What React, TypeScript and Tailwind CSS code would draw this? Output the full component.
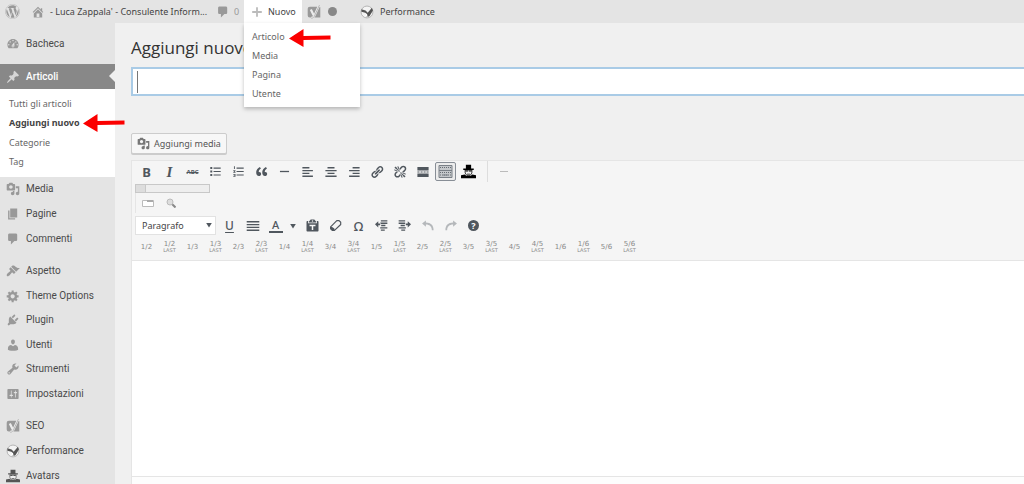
import React from 'react';
import { FaWordpress } from 'react-icons/fa';

type IconProps = { name: string; className?: string };

const PATHS: Record<string, string> = {
  home: 'M16 8.5l1.53 1.53-1.06 1.06L10 4.6l-6.47 6.49-1.06-1.06L10 2.5l4 4v-2h2v4zm-6-2.46l6 5.99V18H4v-5.97zM12 17v-5H8v5h4z',
  dashboard:
    'M3.76 16h12.48c1.1-1.37 1.76-3.11 1.76-5 0-4.42-3.58-8-8-8s-8 3.58-8 8c0 1.89.66 3.63 1.76 5zM10 4c.55 0 1 .45 1 1s-.45 1-1 1-1-.45-1-1 .45-1 1-1zM6 6c.55 0 1 .45 1 1s-.45 1-1 1-1-.45-1-1 .45-1 1-1zm8 0c.55 0 1 .45 1 1s-.45 1-1 1-1-.45-1-1 .45-1 1-1zm-5.37 5.55L12 7v6c0 1.1-.9 2-2 2s-2-.9-2-2c0-.57.24-1.08.63-1.45zM4 10c.55 0 1 .45 1 1s-.45 1-1 1-1-.45-1-1 .45-1 1-1zm12 0c.55 0 1 .45 1 1s-.45 1-1 1-1-.45-1-1 .45-1 1-1zm-5 3c0-.55-.45-1-1-1s-1 .45-1 1 .45 1 1 1 1-.45 1-1z',
  pin: 'M10.44 3.02l1.82-1.82 6.36 6.35-1.83 1.82c-1.05-.68-2.48-.57-3.41.36l-.75.75c-.92.93-1.04 2.35-.35 3.41l-1.83 1.82-2.41-2.41-2.8 2.79c-.42.42-3.38 2.71-3.8 2.29s1.86-3.39 2.28-3.81l2.79-2.79L4.1 9.36l1.83-1.82c1.05.69 2.48.57 3.4-.36l.75-.75c.93-.92 1.05-2.35.36-3.41z',
  media:
    'M13 11V4c0-.55-.45-1-1-1h-1.67L9 1H5L3.67 3H2c-.55 0-1 .45-1 1v7c0 .55.45 1 1 1h10c.55 0 1-.45 1-1zM7 4.5c1.38 0 2.5 1.12 2.5 2.5S8.38 9.5 7 9.5 4.5 8.38 4.5 7 5.62 4.5 7 4.5zM14 6h5v10.5c0 1.38-1.12 2.5-2.5 2.5S14 17.88 14 16.5s1.12-2.5 2.5-2.5c.17 0 .34.02.5.05V9h-3V6zm-4 8.05V13h2v3.5c0 1.38-1.12 2.5-2.5 2.5S7 17.88 7 16.5 8.12 14 9.5 14c.17 0 .34.02.5.05z',
  page: 'M6 15V2h10v13H6zm-1 1h8v2H3V5h2v11z',
  comment: 'M5 2h9c1.1 0 2 .9 2 2v7c0 1.1-.9 2-2 2h-2l-5 5v-5H5c-1.1 0-2-.9-2-2V4c0-1.1.9-2 2-2z',
  brush:
    'M14.48 11.06L7.41 3.99l1.5-1.5c.5-.56 2.3-.47 3.51.32 1.21.8 1.43 1.28 2.91 2.1 1.18.64 2.45 1.26 4.45.85zm-.71.71L6.7 4.7 4.93 6.47c-.39.39-.39 1.02 0 1.41l1.06 1.06c.39.39.39 1.03 0 1.42-.6.6-1.43 1.11-2.21 1.69-.35.26-.7.53-1.01.84C1.43 14.23.4 16.08 1.4 17.07c.99 1 2.84-.03 4.18-1.36.31-.31.58-.66.85-1.02.57-.78 1.08-1.61 1.69-2.21.39-.39 1.02-.39 1.41 0l1.06 1.06c.39.39 1.02.39 1.41 0z',
  gear: 'M18 12h-2.18c-.17.7-.44 1.35-.81 1.93l1.54 1.54-2.1 2.1-1.54-1.54c-.58.36-1.23.63-1.91.79V19H8v-2.18c-.68-.16-1.33-.43-1.91-.79l-1.54 1.54-2.12-2.12 1.54-1.54c-.36-.58-.63-1.23-.79-1.91H1V9.03h2.17c.16-.7.44-1.35.8-1.94L2.43 5.55l2.1-2.1 1.54 1.54c.58-.37 1.24-.64 1.93-.81V2h3v2.18c.68.16 1.33.43 1.91.79l1.54-1.54 2.12 2.12-1.54 1.54c.36.59.64 1.24.8 1.94H18V12zm-8.5 1.5c1.66 0 3-1.34 3-3s-1.34-3-3-3-3 1.34-3 3 1.34 3 3 3z',
  plug: 'M13.11 4.36L9.87 7.6 8 5.73l3.24-3.24c.35-.34 1.05-.2 1.56.32.52.51.66 1.21.31 1.55zm-8 1.77l.91-1.12 9.01 9.01-1.19.84c-.71.71-2.63 1.16-3.82 1.16H6.14L4.9 17.26c-.59.59-1.54.59-2.12 0-.59-.58-.59-1.53 0-2.12l1.24-1.24v-3.88c0-1.13.4-3.19 1.09-3.89zm7.26 3.97l3.24-3.24c.34-.35 1.04-.21 1.55.31.52.51.66 1.21.31 1.55l-3.24 3.25z',
  user: 'M10 9.25c-2.27 0-2.73-3.44-2.73-3.44C7 4.02 7.82 2 9.97 2c2.16 0 2.98 2.02 2.71 3.81 0 0-.41 3.44-2.68 3.44zm0 2.57L12.72 10c2.39 0 4.52 2.33 4.52 4.53v2.49s-3.65 1.13-7.24 1.13c-3.65 0-7.24-1.13-7.24-1.13v-2.49c0-2.25 1.94-4.48 4.47-4.48z',
  wrench:
    'M16.68 9.77c-1.34 1.34-3.3 1.67-4.95.99l-5.41 6.52c-.99.99-2.59.99-3.58 0s-.99-2.59 0-3.57l6.52-5.42c-.68-1.65-.35-3.61.99-4.95 1.28-1.28 3.12-1.62 4.72-1.06l-2.89 2.89 2.82 2.82 2.86-2.87c.53 1.58.18 3.39-1.08 4.65zM3.81 16.21c.4.39 1.04.39 1.43 0 .4-.4.4-1.04 0-1.43-.39-.4-1.03-.4-1.43 0-.39.39-.39 1.03 0 1.43z',
  settings:
    'M18 16V4c0-.55-.45-1-1-1H3c-.55 0-1 .45-1 1v12c0 .55.45 1 1 1h14c.55 0 1-.45 1-1zM8 11h1c.55 0 1 .45 1 1s-.45 1-1 1H8v1.5c0 .28-.22.5-.5.5s-.5-.22-.5-.5V13H6c-.55 0-1-.45-1-1s.45-1 1-1h1V5.5c0-.28.22-.5.5-.5s.5.22.5.5V11zm5-2h-1c-.55 0-1-.45-1-1s.45-1 1-1h1V5.5c0-.28.22-.5.5-.5s.5.22.5.5V7h1c.55 0 1 .45 1 1s-.45 1-1 1h-1v5.5c0 .28-.22.5-.5.5s-.5-.22-.5-.5V9z',
  plus: 'M8.5 2h3v6.5H18v3h-6.5V18h-3v-6.5H2v-3h6.5z',
  bullets: 'M2 3h3v3H2zM7 4h11v1.6H7zM2 8.5h3v3H2zM7 9.3h11v1.6H7zM2 14h3v3H2zM7 14.7h11v1.6H7z',
  numbers:
    'M3 2h1.4v4H3zM7 4h11v1.6H7zM2 8h3.4v1.4L4 10.8h1.4V12H2v-1.2l1.6-1.6H2zM7 9.3h11v1.6H7zM2 14h3.4v4H2v-1h2v-.6H2.6v-.8H4V15H2zM7 14.7h11v1.6H7z',
  quote:
    'M9.49 13.22c0-.74-.2-1.38-.61-1.9-.62-.78-1.83-.88-2.53-.72-.29-1.65 1.11-3.75 2.92-4.65L7.88 4c-2.73 1.3-5.42 4.28-4.96 8.05C3.21 14.43 4.59 16 6.54 16c.85 0 1.56-.25 2.12-.75s.83-1.18.83-2.03zm8.05 0c0-.74-.2-1.38-.61-1.9-.63-.78-1.83-.88-2.53-.72-.29-1.65 1.11-3.75 2.92-4.65L15.93 4c-2.73 1.3-5.41 4.28-4.95 8.05.29 2.38 1.66 3.95 3.61 3.95.85 0 1.56-.25 2.12-.75s.83-1.18.83-2.03z',
  rule: 'M3 9h14v2H3z',
  left: 'M2 3h10v2H2zM2 7h15v2H2zM2 11h10v2H2zM2 15h15v2H2z',
  center: 'M5 3h10v2H5zM2 7h16v2H2zM5 11h10v2H5zM2 15h16v2H2z',
  right: 'M8 3h10v2H8zM3 7h15v2H3zM8 11h10v2H8zM3 15h15v2H3z',
  justify: 'M1 3h18v2H1zM1 7h18v2H1zM1 11h18v2H1zM1 15h18v2H1z',
  more: 'M2 3h16v5H2zM2 9.4h3v1.4H2zM6.5 9.4h3v1.4h-3zM10.8 9.4h3v1.4h-3zM15 9.4h3v1.4h-3zM2 12.3h16v5H2z',
  link: 'M17.74 2.76c1.68 1.69 1.68 4.41 0 6.1l-1.53 1.52c-1.12 1.12-2.7 1.47-4.14 1.09l2.62-2.61.76-.77.76-.76c.84-.84.84-2.2 0-3.04-.84-.85-2.2-.85-3.04 0l-.77.76-3.38 3.38c-.37-1.44-.02-3.02 1.1-4.14l1.52-1.53c1.69-1.68 4.42-1.68 6.1 0zM8.59 13.43l5.34-5.34c.42-.42.42-1.1 0-1.52-.44-.43-1.13-.39-1.53 0l-5.33 5.34c-.42.42-.42 1.1 0 1.52.44.43 1.13.39 1.52 0zm-.76 2.29l4.14-4.15c.38 1.44.03 3.02-1.09 4.14l-1.52 1.53c-1.69 1.68-4.41 1.68-6.1 0-1.68-1.68-1.68-4.42 0-6.1l1.53-1.52c1.12-1.12 2.7-1.47 4.14-1.1l-4.14 4.15c-.85.84-.85 2.2 0 3.05.84.84 2.2.84 3.04 0z',
  unlink:
    'M17.74 2.26c1.68 1.69 1.68 4.41 0 6.1l-1.53 1.52c-.32.33-.69.58-1.08.77L13 10l1.69-1.64.76-.77.76-.76c.84-.84.84-2.2 0-3.04-.84-.85-2.2-.85-3.04 0l-.77.76-.76.76L10 7l-.65-2.14c.19-.38.44-.75.77-1.07l1.52-1.53c1.69-1.68 4.42-1.68 6.1 0zM2 4l8 6-6-8zm4-2l4 8-2-8H6zM2 6l8 4-8-2V6zm7.36 7.69L10 13l.74 2.35-1.38 1.39c-1.69 1.68-4.41 1.68-6.1 0-1.68-1.68-1.68-4.42 0-6.1l1.39-1.38L7 10l-.69.64-1.52 1.53c-.85.84-.85 2.2 0 3.04.84.85 2.2.85 3.04 0zM18 16l-8-6 6 8zm-4 2l-4-8 2 8h2zm4-4l-8-4 8 2v2z',
  paste:
    'M12.38 2L15 5v1H5V5l2.64-3h4.74zM10 5c.55 0 1-.44 1-1 0-.55-.45-1-1-1s-1 .45-1 1c0 .56.45 1 1 1zM15.45 4H17c.55 0 1 .45 1 1v12c0 .56-.45 1-1 1H3c-.55 0-1-.44-1-1V5c0-.55.45-1 1-1h1.55L4 4.63V7h12V4.63zM14 11V9H6v2h3v5h2v-5h3z',
  outdent: 'M0 8L5 3.500V7h3v2.600H5V13zM9 2h10v2H9zM8 5.500h11v2H9zM9.500 9H16v2H9.500zM8 12.500h11v2H8zM9 16h6v2H9z',
  indent: 'M20 8l-5-4.500V7h-3v2.600h3V13zM1 2h10v2H1zM1 5.500h10v2H1zM4 9h6.500v2H4zM1 12.500h11v2H1zM5 16h6v2H5z',
  undo: 'M7 2v3c7 0 11 4 11 11h-2.500C15.500 11 12 8 7 8v3L1.500 6.500z',
  redo: 'M13 2v3C6 5 2 9 2 16h2.500C4.500 11 8 8 13 8v3l5.500-4.500z',
  caret: 'M3 5h14l-7 11z',
};

function Icon({ name, className = 'size-[14px]' }: IconProps) {
  return (
    <svg viewBox="0 0 20 20" fill="currentColor" fillRule="evenodd" aria-hidden="true" className={`shrink-0 ${className}`}>
      <path d={PATHS[name]} />
    </svg>
  );
}

function Yoast({ className = 'size-[14px]' }: { className?: string }) {
  return (
    <svg viewBox="0 0 20 20" aria-hidden="true" className={`shrink-0 ${className}`}>
      <path d="M4 2.500h14a1 1 0 0 1 1 1V18H4a3 3 0 0 1-3-3V5.500a3 3 0 0 1 3-3z" fill="#999" />
      <path d="M5.500 6.500l4 8M17.500 0L10.500 15.500C9.700 17.500 8.500 18.500 6 18.500" fill="none" stroke="#ececec" strokeWidth="3.200" />
      <path d="M17.800 0L10.800 15.500C10 17.500 8.500 19 6 19" fill="none" stroke="#aaa" strokeWidth="1.200" />
    </svg>
  );
}

function Gauge() {
  return (
    <svg viewBox="0 0 20 20" aria-hidden="true" className="size-[14px] shrink-0">
      <circle cx="10" cy="10" r="8.500" fill="#f4f4f4" stroke="#aaa" strokeWidth="1.200" />
      <path d="M2 6l6 2 3 3 6-7 1.500 4-5 8-4 1.500-2-6.500L2 9.500z" fill="#555" />
      <path d="M7 11l3 2 1 4-3-1z" fill="#fff" />
    </svg>
  );
}

function Spy({ className = 'size-[14px]' }: { className?: string }) {
  return (
    <svg viewBox="0 0 20 20" fill="currentColor" aria-hidden="true" className={`shrink-0 ${className}`}>
      <path d="M6.500 1h7v5H17v2H3V6h3.500zM0 19v-4l5-1 2 1.500h6l2-1.500 5 1v4z" />
      <path d="M5.500 8h9v4l-2.500 3.500H8L5.500 12z" fill="#f0f0f0" stroke="currentColor" strokeWidth="1" />
      <path d="M6 8.500h3.500v1.500H6zM10.500 8.500H14V10h-3.500zM8 13h4v1H8z" />
    </svg>
  );
}

function Eraser() {
  return (
    <svg viewBox="0 0 20 20" aria-hidden="true" className="size-[13px] shrink-0">
      <path d="M12 2.500h3.500L18 5v3.500L8.500 17.500H5L2.500 15v-3z" fill="#f5f5f5" stroke="currentColor" strokeWidth="1.800" strokeLinejoin="round" />
      <path d="M2.500 12l3 .500 3 2.500v2.500H5L2.500 15z" fill="currentColor" />
    </svg>
  );
}

function RedArrow() {
  return (
    <svg viewBox="0 0 42 18" aria-hidden="true" className="h-[18px] w-[42px]">
      <path d="M0 9.500L14.500 0v7L41.500 6.500v4L14.500 11v7z" fill="#fb0000" />
    </svg>
  );
}

function MenuItem({ icon, label }: { icon: React.ReactNode; label: string }) {
  return (
    <li className="flex flex-1">
      <a href="#" className="flex flex-1 items-center gap-[6px] pl-[6px]">
        {icon}
        <span>{label}</span>
      </a>
    </li>
  );
}

function Sidebar() {
  return (
    <nav aria-label="Menu principale" className="w-[115px] shrink-0 bg-[#e4e4e4] pt-2 font-['Roboto',sans-serif] text-[10px] text-[#4a4a4a] [&_svg]:text-[#999]">
      <ul className="flex h-[25px] flex-col">
        <MenuItem icon={<Icon name="dashboard" />} label="Bacheca" />
      </ul>
      <a href="#" className="relative mt-2 flex h-[25px] items-center gap-[6px] bg-[#888] pl-[6px] font-medium text-white [&_svg]:text-[#d6d6d6]!">
        <Icon name="pin" />
        <span>Articoli</span>
        <span className="absolute top-[6px] right-0 border-y-[6px] border-r-[6px] border-y-transparent border-r-[#f0f0f0]" />
      </a>
      <ul className="flex h-[88px] flex-col bg-white py-[5px] pl-[9px] font-['Noto_Sans',sans-serif] text-[9px] text-[#666]">
        <li className="flex flex-1 items-center"><a href="#">Tutti gli articoli</a></li>
        <li className="relative flex flex-1 items-center font-bold text-[#444]">
          <a href="#">Aggiungi nuovo</a>
          <span className="absolute top-0 left-[74px] z-10"><RedArrow /></span>
        </li>
        <li className="flex flex-1 items-center"><a href="#">Categorie</a></li>
        <li className="flex flex-1 items-center"><a href="#">Tag</a></li>
      </ul>
      <ul className="flex h-[74px] flex-col">
        <MenuItem icon={<Icon name="media" />} label="Media" />
        <MenuItem icon={<Icon name="page" />} label="Pagine" />
        <MenuItem icon={<Icon name="comment" />} label="Commenti" />
      </ul>
      <ul className="mt-2 flex h-[147px] flex-col">
        <MenuItem icon={<Icon name="brush" />} label="Aspetto" />
        <MenuItem icon={<Icon name="gear" />} label="Theme Options" />
        <MenuItem icon={<Icon name="plug" />} label="Plugin" />
        <MenuItem icon={<Icon name="user" />} label="Utenti" />
        <MenuItem icon={<Icon name="wrench" />} label="Strumenti" />
        <MenuItem icon={<Icon name="settings" />} label="Impostazioni" />
      </ul>
      <ul className="mt-2 flex h-[74px] flex-col">
        <MenuItem icon={<Yoast />} label="SEO" />
        <MenuItem icon={<Gauge />} label="Performance" />
        <MenuItem icon={<Spy className="size-[14px] text-[#555]!" />} label="Avatars" />
      </ul>
    </nav>
  );
}

function AdminBar() {
  return (
    <header className="flex h-[23px] shrink-0 items-stretch bg-[#e4e4e4] text-[#444]">
      <a href="#" aria-label="WordPress" className="flex w-[31px] items-center pl-[5px] text-[#999]">
        <FaWordpress className="size-[15px]" />
      </a>
      <a href="#" className="flex w-[185px] items-center gap-[5px] whitespace-nowrap">
        <Icon name="home" className="size-[14px] text-[#999]" />
        <span>- Luca Zappala' - Consulente Inform...</span>
      </a>
      <a href="#" className="flex w-[28px] items-center gap-[4px] text-[#999]">
        <Icon name="comment" className="size-[14px]" />
        <span>0</span>
      </a>
      <div className="relative flex w-[58px] bg-white">
        <a href="#" className="flex items-center gap-[5px] pl-[7px]">
          <Icon name="plus" className="size-[12px] text-[#bbb]" />
          <span>Nuovo</span>
        </a>
        <ul className="absolute top-[23px] left-0 z-20 flex w-[116px] flex-col bg-white py-1 pl-2 text-[#666] shadow-[0_2px_4px_rgba(0,0,0,0.25)]">
          <li className="relative flex h-[19px] items-center">
            <a href="#">Articolo</a>
            <span className="absolute top-[2px] left-[37px]"><RedArrow /></span>
          </li>
          <li className="flex h-[19px] items-center"><a href="#">Media</a></li>
          <li className="flex h-[19px] items-center"><a href="#">Pagina</a></li>
          <li className="flex h-[19px] items-center"><a href="#">Utente</a></li>
        </ul>
      </div>
      <a href="#" aria-label="SEO" className="flex w-[58px] items-center gap-[7px] pl-[5px]">
        <Yoast />
        <span className="size-[9px] rounded-full bg-[#888]" />
      </a>
      <a href="#" className="flex items-center gap-[6px]">
        <Gauge />
        <span>Performance</span>
      </a>
    </header>
  );
}

function Tool({ label, children }: { label: string; children: React.ReactNode }) {
  return (
    <button type="button" aria-label={label} className="flex h-[20px] w-[23px] shrink-0 items-center justify-center">
      {children}
    </button>
  );
}

const FRACTIONS = ['1/2', '1/3', '2/3', '1/4', '3/4', '1/5', '2/5', '3/5', '4/5', '1/6', '5/6'];

function Toolbar() {
  return (
    <div className="flex h-[100px] flex-col border-b border-[#e5e5e5] bg-[#f5f5f5] pl-[3px] text-[#50575e]">
      <div className="flex h-[21px] items-center">
        <Tool label="Grassetto"><span className="text-[13px] font-bold">B</span></Tool>
        <Tool label="Corsivo"><span className="font-['Liberation_Serif',serif] text-[15px] font-bold italic">I</span></Tool>
        <Tool label="Barrato"><span className="text-[6px] font-bold line-through">ABC</span></Tool>
        <Tool label="Elenco puntato"><Icon name="bullets" className="size-[13px]" /></Tool>
        <Tool label="Elenco numerato"><Icon name="numbers" className="size-[13px]" /></Tool>
        <Tool label="Citazione"><Icon name="quote" className="size-[15px]" /></Tool>
        <Tool label="Linea orizzontale"><Icon name="rule" className="size-[13px]" /></Tool>
        <Tool label="Allinea a sinistra"><Icon name="left" /></Tool>
        <Tool label="Allinea al centro"><Icon name="center" /></Tool>
        <Tool label="Allinea a destra"><Icon name="right" /></Tool>
        <Tool label="Inserisci link"><Icon name="link" /></Tool>
        <Tool label="Rimuovi link"><Icon name="unlink" /></Tool>
        <Tool label="Leggi tutto"><Icon name="more" /></Tool>
        <Tool label="Mostra barra strumenti">
          <span className="flex h-[19px] w-[21px] shrink-0 items-center justify-center rounded-[2px] border border-[#888e96] bg-[#ececec]">
            <svg viewBox="0 0 15 13" aria-hidden="true" className="h-[13px] w-[15px]">
              <path d="M1 .5h13v12H1z" fill="#c4c7ca" stroke="#7a8087" />
              <path d="M2 2.500h11M2 7.500h11M2 10h11" stroke="#666c73" strokeDasharray="1 1" />
              <path d="M1 5.500h13M5 10h5" stroke="#7a8087" />
            </svg>
          </span>
        </Tool>
        <Tool label="Avatar"><Spy className="size-[15px] text-black" /></Tool>
        <span className="mr-1 ml-[7px] h-[21px] w-px bg-[#ddd]" />
        <Tool label="Separatore"><span className="h-px w-2 bg-[#bbb]" /></Tool>
      </div>
      <div className="mt-[2px] flex h-[9px] w-[75px] border border-[#c8c8c8] bg-[#eee]">
        <span className="w-[10px] border-r border-[#c8c8c8] bg-[#ddd]" />
      </div>
      <div className="flex h-[20px] items-center border-l border-[#e5e5e5]">
        <Tool label="Scheda">
          <svg viewBox="0 0 12 9" aria-hidden="true" className="h-[9px] w-[12px]">
            <path d="M.5 1.500h11v6H.5z" fill="#fff" stroke="#bbb" />
            <path d="M5 1h6v2H5z" fill="#aaa" />
          </svg>
        </Tool>
        <Tool label="Cerca">
          <svg viewBox="0 0 10 10" aria-hidden="true" className="size-[10px]">
            <path d="M6 6l3.500 3.500" stroke="#888" strokeWidth="2" />
            <circle cx="4" cy="4" r="3" fill="#ddd" stroke="#bbb" />
          </svg>
        </Tool>
      </div>
      <div className="mt-px flex h-[23px] items-center">
        <div className="relative mr-[2px] flex h-[19px] w-[81px]">
          <select aria-label="Formato" className="w-full appearance-none border border-[#e2e2e2] bg-white pl-[6px] text-[9px] text-[#444]">
            <option>Paragrafo</option>
          </select>
          <span className="pointer-events-none absolute top-[5px] right-[3px]"><Icon name="caret" className="size-[8px]" /></span>
        </div>
        <Tool label="Sottolineato"><span className="text-[12px] font-medium underline underline-offset-2">U</span></Tool>
        <Tool label="Giustifica"><Icon name="justify" /></Tool>
        <Tool label="Colore testo">
          <span className="w-[14px] border-b-2 border-[#50575e] text-[11px] leading-[12px] font-medium">A</span>
        </Tool>
        <button type="button" aria-label="Scegli colore" className="flex w-[14px] items-center pl-[2px]"><Icon name="caret" className="size-[8px]" /></button>
        <Tool label="Incolla come testo"><Icon name="paste" className="size-[15px]" /></Tool>
        <Tool label="Cancella formattazione"><Eraser /></Tool>
        <Tool label="Caratteri speciali"><span className="text-[13px] font-medium">Ω</span></Tool>
        <Tool label="Riduci rientro"><Icon name="outdent" className="size-[13px]" /></Tool>
        <Tool label="Aumenta rientro"><Icon name="indent" className="size-[13px]" /></Tool>
        <Tool label="Annulla"><Icon name="undo" className="size-[14px] text-[#b5b8bb]" /></Tool>
        <Tool label="Ripeti"><Icon name="redo" className="size-[14px] text-[#b5b8bb]" /></Tool>
        <Tool label="Aiuto">
          <span className="flex size-[11px] items-center justify-center rounded-full bg-[#50575e] text-[9px] leading-none font-bold text-white">?</span>
        </Tool>
      </div>
      <div className="flex h-[20px] items-center font-['DejaVu_Sans',sans-serif] text-[#888]">
        {FRACTIONS.map((f) => (
          <React.Fragment key={f}>
            <Tool label={f}><span className="text-[7px]">{f}</span></Tool>
            <Tool label={`${f} last`}>
              <span className="flex flex-col items-center">
                <span className="text-[7px] leading-[7px]">{f}</span>
                <span className="text-[5px] leading-[5px]">LAST</span>
              </span>
            </Tool>
          </React.Fragment>
        ))}
      </div>
    </div>
  );
}

export default function App() {
  return (
    <div className="flex h-screen flex-col overflow-hidden bg-[#f0f0f0] font-['Noto_Sans',sans-serif] text-[9px] leading-[14px]">
      <AdminBar />
      <div className="flex min-h-0 flex-1">
        <Sidebar />
        <main className="flex min-w-0 flex-1 flex-col pt-[14px] pl-4">
          <h1 className="h-[22px] font-['Open_Sans',sans-serif] text-[17px] leading-[22px] whitespace-nowrap text-[#333]">Aggiungi nuovo</h1>
          <div className="mt-2 flex h-[29px] shrink-0 items-center border-2 border-r-0 border-[#a9cbe6] bg-white pl-1">
            <span className="h-[22px] w-px bg-[#777]" />
            <input type="text" aria-label="Titolo" className="h-full min-w-0 flex-1 bg-transparent text-[17px] outline-none" />
          </div>
          <button
            type="button"
            className="mt-[37px] flex h-[21px] shrink-0 items-center gap-1 self-start rounded-[2px] border border-[#ccc] bg-[#f7f7f7] px-[5px] text-[#555] shadow-[0_1px_0_#ccc]"
          >
            <Icon name="media" className="size-[13px] text-[#777]" />
            <span>Aggiungi media</span>
          </button>
          <section className="mt-[6px] flex min-h-0 flex-1 flex-col border-t border-l border-[#e5e5e5] bg-white">
            <Toolbar />
            <textarea aria-label="Contenuto" className="min-h-0 flex-1 resize-none border-b border-[#e5e5e5] bg-white outline-none" />
            <div className="h-[7px] shrink-0 bg-[#fdfdfd]" />
          </section>
        </main>
      </div>
    </div>
  );
}
